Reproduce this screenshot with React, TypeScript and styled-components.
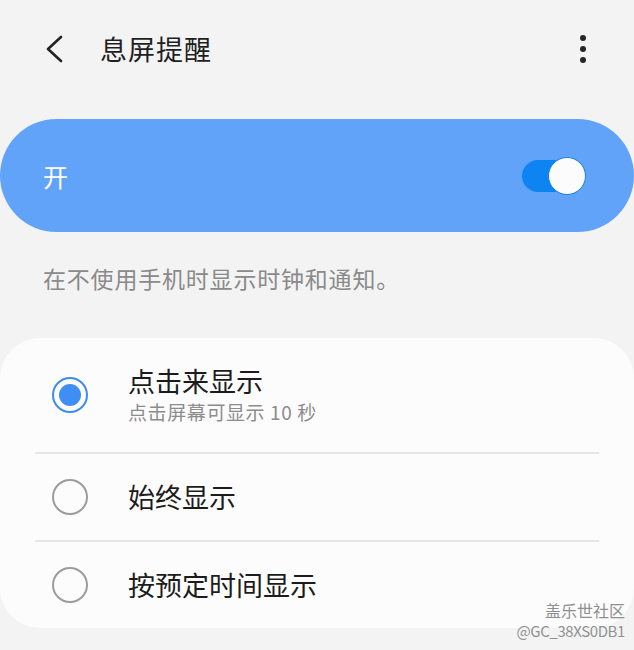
import React from 'react'
import styled, { createGlobalStyle } from 'styled-components'

const GlobalStyle = createGlobalStyle`
  html, body {
    margin: 0;
    padding: 0;
    background: #f3f3f3;
  }
  body {
    font-family: "Noto Sans CJK SC", "Noto Sans", sans-serif;
  }
`

const StyledPage = styled.div`
  position: relative;
  width: 634px;
  height: 650px;
  overflow: hidden;
  background: #f3f3f3;
  display: flex;
  flex-flow: column nowrap;
`

const StyledHeader = styled.div`
  height: 98px;
  display: flex;
  align-items: center;
  padding: 0 44px 0 42px;
`

const StyledBack = styled.svg`
  width: 26px;
  height: 30px;
  flex-shrink: 0;
`

const StyledTitle = styled.div`
  flex-grow: 1;
  margin-left: 32px;
  font-size: 27px;
  color: #1f1f1f;
  line-height: 36px;
  letter-spacing: 1px;
`

const StyledMore = styled.div`
  display: flex;
  flex-flow: column nowrap;
  gap: 5px;
  align-items: center;
  width: 14px;
`

const StyledDot = styled.span`
  width: 6px;
  height: 6px;
  border-radius: 50%;
  background: #262626;
`

const StyledSwitchCard = styled.div`
  margin-top: 21px;
  height: 113px;
  border-radius: 57px;
  background: #62a3fa;
  display: flex;
  align-items: center;
  justify-content: space-between;
  padding: 0 48px 0 43px;
`

const StyledSwitchLabel = styled.span`
  color: #ffffff;
  font-size: 25px;
  line-height: 32px;
`

const StyledToggle = styled.div`
  position: relative;
  width: 64px;
  height: 38px;
  display: flex;
  align-items: center;
`

const StyledTrack = styled.div`
  width: 56px;
  height: 32px;
  border-radius: 16px;
  background: #0d84f2;
`

const StyledKnob = styled.div`
  position: absolute;
  right: 0;
  top: 0;
  width: 36px;
  height: 36px;
  border-radius: 50%;
  background: #fcfcfc;
  border: 1px solid #1a7ee6;
`

const StyledDescription = styled.div`
  padding: 30px 43px 44px;
  font-size: 23px;
  line-height: 32px;
  letter-spacing: 0.8px;
  color: #8a8a8a;
`

const StyledOptions = styled.div`
  background: #fcfcfc;
  border-radius: 40px;
  display: flex;
  flex-flow: column nowrap;
  height: 290px;
`

const StyledRow = styled.div<{ $tall?: boolean }>`
  display: flex;
  align-items: center;
  gap: 40px;
  padding: 0 52px;
  height: ${(p) => (p.$tall ? '115px' : '87px')};
`

const StyledDivider = styled.div`
  height: 2px;
  margin: 0 35px;
  background: #e6e6e6;
`

const StyledRadio = styled.div<{ $checked?: boolean }>`
  width: 36px;
  height: 36px;
  box-sizing: border-box;
  border-radius: 50%;
  border: 2px solid ${(p) => (p.$checked ? '#3f8cf0' : '#9c9c9c')};
  display: flex;
  align-items: center;
  justify-content: center;
  flex-shrink: 0;
`

const StyledRadioDot = styled.div`
  width: 22px;
  height: 22px;
  border-radius: 50%;
  background: #3f8ef4;
`

const StyledOptionText = styled.div`
  display: flex;
  flex-flow: column nowrap;
`

const StyledOptionTitle = styled.span`
  font-size: 27px;
  line-height: 34px;
  color: #1c1c1c;
`

const StyledOptionSub = styled.span`
  font-size: 19px;
  line-height: 26px;
  letter-spacing: 0.6px;
  color: #8c8c8c;
  margin-top: 1px;
`

const StyledWatermark = styled.div`
  position: absolute;
  right: 9px;
  bottom: 11px;
  display: flex;
  flex-flow: column nowrap;
  align-items: flex-end;
  gap: 4px;
  color: #8f8f8f;
  text-shadow: 0 0 1px #ffffff;
  font-family: "Noto Sans CJK SC", "Liberation Sans", sans-serif;
`

const StyledMarkName = styled.span`
  font-size: 16px;
  line-height: 18px;
`

const StyledMarkId = styled.span`
  font-size: 15px;
  line-height: 16px;
  letter-spacing: -0.4px;
`

const options = [
  { title: '点击来显示', sub: '点击屏幕可显示 10 秒', checked: true },
  { title: '始终显示' },
  { title: '按预定时间显示' },
]

const App: React.FC = () => (
  <>
    <GlobalStyle />
    <StyledPage>
      <StyledHeader>
        <StyledBack viewBox="0 0 26 30">
          <path d="M19 3 L6 15 L19 27" fill="none" stroke="#222" strokeWidth="2.6" strokeLinecap="round" strokeLinejoin="round" />
        </StyledBack>
        <StyledTitle>息屏提醒</StyledTitle>
        <StyledMore>
          <StyledDot />
          <StyledDot />
          <StyledDot />
        </StyledMore>
      </StyledHeader>

      <StyledSwitchCard>
        <StyledSwitchLabel>开</StyledSwitchLabel>
        <StyledToggle>
          <StyledTrack />
          <StyledKnob />
        </StyledToggle>
      </StyledSwitchCard>

      <StyledDescription>在不使用手机时显示时钟和通知。</StyledDescription>

      <StyledOptions>
        {options.map((o, i) => (
          <React.Fragment key={o.title}>
            {i > 0 && <StyledDivider />}
            <StyledRow $tall={!!o.sub}>
              <StyledRadio $checked={o.checked}>{o.checked && <StyledRadioDot />}</StyledRadio>
              <StyledOptionText>
                <StyledOptionTitle>{o.title}</StyledOptionTitle>
                {o.sub && <StyledOptionSub>{o.sub}</StyledOptionSub>}
              </StyledOptionText>
            </StyledRow>
          </React.Fragment>
        ))}
      </StyledOptions>

      <StyledWatermark>
        <StyledMarkName>盖乐世社区</StyledMarkName>
        <StyledMarkId>@GC_38XS0DB1</StyledMarkId>
      </StyledWatermark>
    </StyledPage>
  </>
)

export default App
